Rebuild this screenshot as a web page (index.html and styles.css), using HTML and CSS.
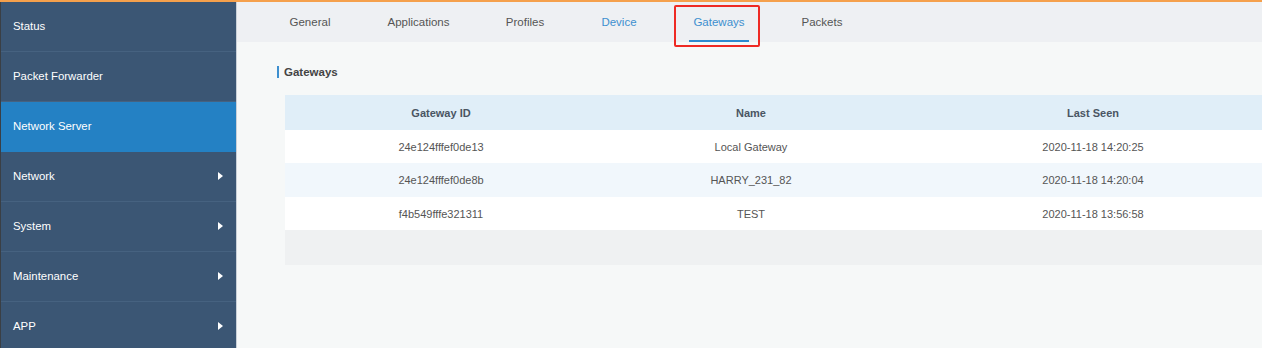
FILE: index.html
```html
<!DOCTYPE html>
<html lang="en">
<head>
  <meta charset="UTF-8" />
  <title>Network Server - Gateways</title>
  <link rel="stylesheet" href="styles.css">
</head>
<body>

  <div class="topline"></div>

  <div class="layout">
    <nav class="sidebar">
      <a class="menu-item">Status</a>
      <a class="menu-item">Packet Forwarder</a>
      <a class="menu-item active">Network Server</a>
      <a class="menu-item">Network <span class="arrow"></span></a>
      <a class="menu-item">System <span class="arrow"></span></a>
      <a class="menu-item">Maintenance <span class="arrow"></span></a>
      <a class="menu-item">APP <span class="arrow"></span></a>
    </nav>

    <main class="main">
      <div class="tabs">
        <a class="tab tab-general">General</a>
        <a class="tab tab-apps">Applications</a>
        <a class="tab tab-profiles">Profiles</a>
        <a class="tab tab-device tab-blue">Device</a>
        <a class="tab tab-gateways tab-current">Gateways</a>
        <a class="tab tab-packets">Packets</a>
      </div>

      <div class="content">
        <h3 class="section-title">Gateways</h3>

        <table class="grid">
          <colgroup>
            <col class="col-id">
            <col class="col-name">
            <col class="col-seen">
          </colgroup>
          <thead>
            <tr>
              <th>Gateway ID</th>
              <th>Name</th>
              <th>Last Seen</th>
            </tr>
          </thead>
          <tbody>
            <tr>
              <td>24e124fffef0de13</td>
              <td>Local Gateway</td>
              <td>2020-11-18 14:20:25</td>
            </tr>
            <tr>
              <td>24e124fffef0de8b</td>
              <td>HARRY_231_82</td>
              <td>2020-11-18 14:20:04</td>
            </tr>
            <tr>
              <td>f4b549fffe321311</td>
              <td>TEST</td>
              <td>2020-11-18 13:56:58</td>
            </tr>
            <tr class="empty-row">
              <td colspan="3"></td>
            </tr>
          </tbody>
        </table>
      </div>
    </main>
  </div>

</body>
</html>
```

FILE: styles.css
```css
body {
  margin: 0;
  padding: 0;
  font-family: "Liberation Sans", Arial, sans-serif;
  font-size: 12px;
  background: #f6f8f8;
  overflow: hidden;
}
.topline {
  height: 2px;
  background: #f5a04c; /* orange accent on top */
}
.layout {
  display: flex;
  height: 346px;
}

/* left menu */
.sidebar {
  width: 235px;
  flex-shrink: 0;
  background: #3b5674;
  border-left: 1px solid #3a3f45;
  border-right: 1px solid #c9d0d8;
  display: flex;
  flex-direction: column;
}
.menu-item {
  display: flex;
  align-items: center;
  justify-content: space-between;
  padding: 0 13px 1px 12px;
  box-sizing: border-box;
  height: 50px;
  border-bottom: 1px solid #466280;
  color: #fff;
  font-size: 11.4px;
  text-decoration: none;
  flex-shrink: 0;
}
.menu-item.active {
  background: #2481c4;
  border-bottom-color: #2481c4;
}
.arrow {
  width: 0;
  height: 0;
  border-top: 4px solid transparent;
  border-bottom: 4px solid transparent;
  border-left: 5px solid #fff;
}

/* right side */
.main {
  flex: 1;
  overflow: hidden;
}
.tabs {
  height: 40px;
  background: #eef0f3;
  display: flex;
  padding-left: 19px;
}
.tab {
  position: relative;
  display: flex;
  align-items: center;
  justify-content: center;
  flex-shrink: 0;
  height: 40px;
  color: #555;
  font-size: 11.5px;
}
.tab-general { width: 108px; }
.tab-apps { width: 109px; }
.tab-profiles { width: 104px; }
.tab-device { width: 84px; }
.tab-gateways { width: 116px; }
.tab-packets { width: 90px; }
.tab-blue,
.tab-current {
  color: #3d8fcf;
}
.tab-current::before {
  content: "";
  position: absolute;
  left: 28px;
  width: 60px;
  bottom: 0;
  height: 2px;
  background: #2d8ad0;
}
.tab-current::after {
  /* red highlight box */
  content: "";
  position: absolute;
  left: 13px;
  width: 86px;
  top: 3px;
  bottom: -5px;
  box-sizing: border-box;
  border: 2px solid #ee2a24;
  border-radius: 2px;
}

.content {
  padding: 24px 0 0 40px;
}
.section-title {
  margin: 0 0 17px 0;
  padding-left: 5px;
  border-left: 2px solid #3d8fcf;
  font-size: 11.5px;
  line-height: 12px;
  color: #444;
}
.grid {
  margin-left: 8px;
  width: 996px;
  border-collapse: collapse;
  table-layout: fixed;
}
.col-id { width: 312px; }
.col-name { width: 308px; }
.grid th {
  height: 35px;
  padding: 0;
  background: #e0eef8;
  color: #4a5563;
  font-weight: bold;
  font-size: 11px;
}
.grid td {
  height: 33px;
  text-align: center;
  color: #555;
  background: #fff;
  font-size: 11px;
  padding: 0;
}
.grid tbody tr:nth-child(2) td {
  height: 34px;
  background: #f1f7fc;
}
.grid .empty-row td {
  height: 35px;
  background: #eff1f2;
}
```
